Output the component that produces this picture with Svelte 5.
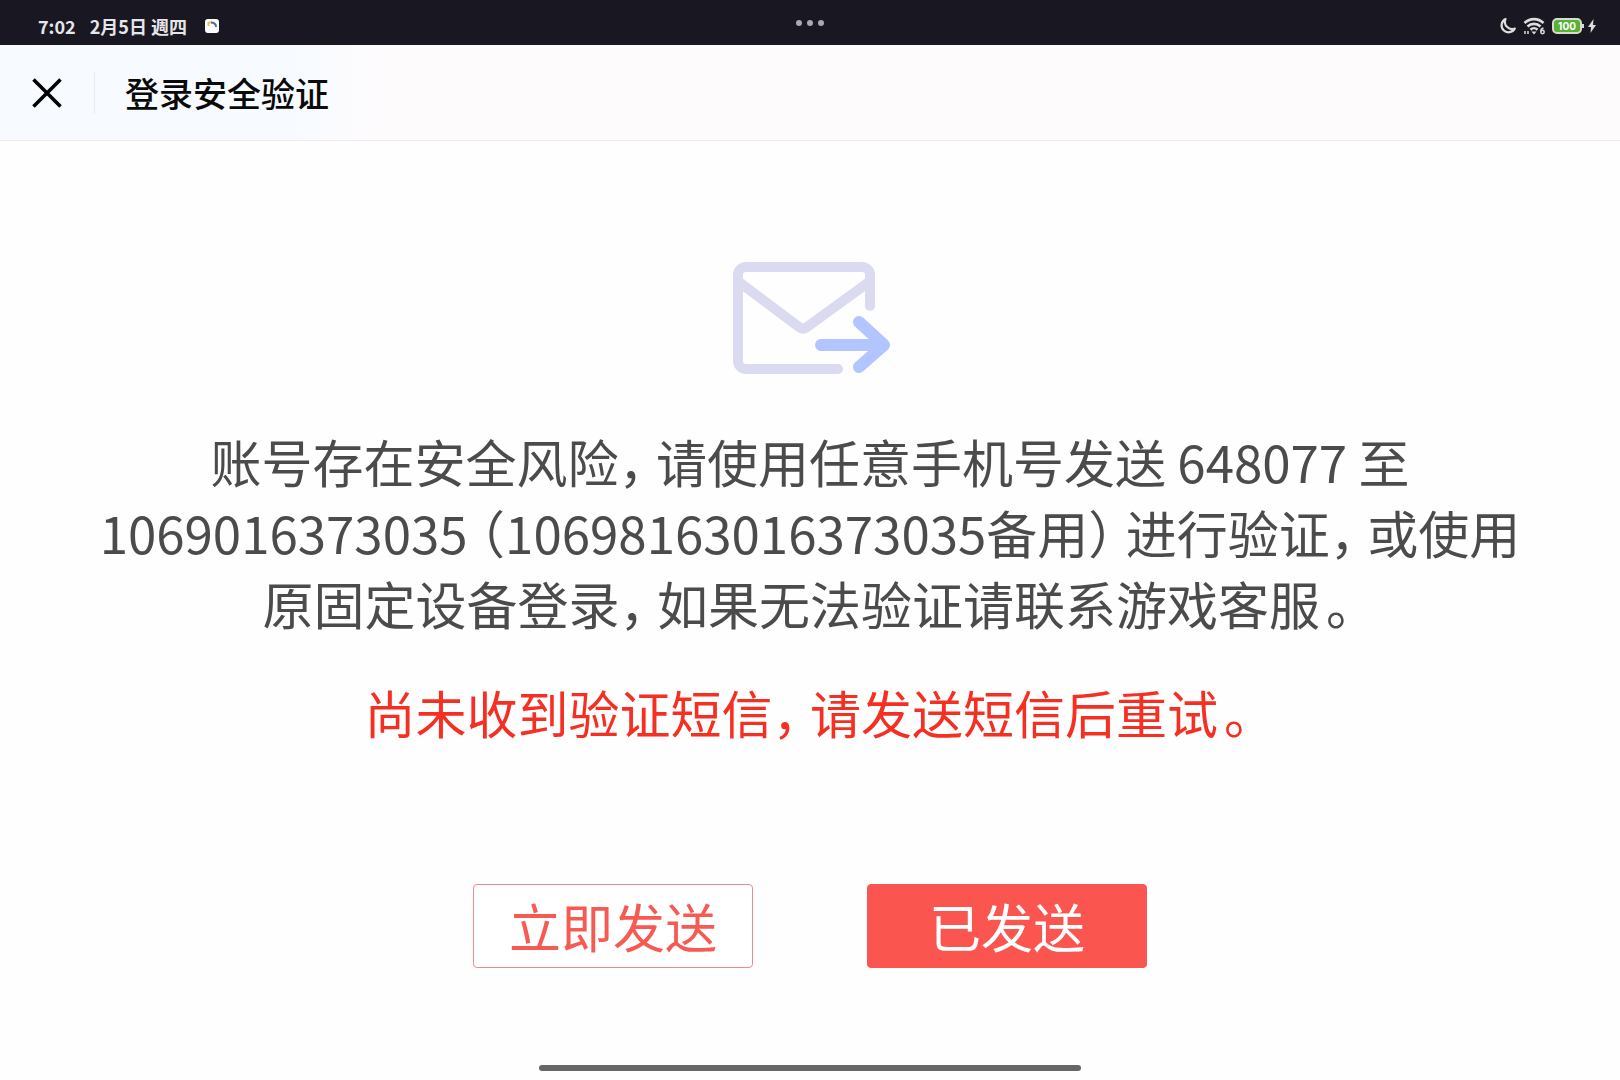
<script lang="ts">
  const time = '7:02';
  const date = '2月5日 週四';
  const battery = 100;

  let visible = $state(true);
</script>

<div class="page">
  <div class="status-bar">
    <div class="status-left">
      <span>{time}</span>
      <span>{date}</span>
      <svg class="notice" viewBox="0 0 14 14" aria-hidden="true">
        <rect width="14" height="14" rx="3" fill="#fff" />
        <path d="M3.500 7V3.500h3" fill="none" stroke="#e3c65a" stroke-width="2" />
        <path d="M6 3.500q5 0 5 4.500" fill="none" stroke="#596a9c" stroke-width="2" />
      </svg>
    </div>
    <svg class="dots" viewBox="0 0 28 6" aria-hidden="true">
      <circle cx="3" cy="3" r="3" />
      <circle cx="14" cy="3" r="3" />
      <circle cx="25" cy="3" r="3" />
    </svg>
    <div class="status-right">
      <svg class="moon" viewBox="0 0 18 18" aria-hidden="true">
        <path d="M6.500 2a7 7 0 1 0 9.300 9.500A7.200 7.200 0 0 1 6.500 2Z" fill="none" stroke="#ddd" stroke-width="2.200" stroke-linejoin="round" />
      </svg>
      <svg class="wifi" viewBox="0 0 23 18" aria-hidden="true">
        <path d="M1.500 6a13.500 13.500 0 0 1 19 0M4.500 9.500a9.300 9.300 0 0 1 13 0M7.500 12.700a5 5 0 0 1 7 0" fill="none" stroke="#ddd" stroke-width="2.600" />
        <path d="M8.500 14.500h5L11 17.500Z" fill="#ddd" />
        <path d="M2 17v-3M5 17v-3" stroke="#bbb" stroke-width="1.800" />
        <circle cx="19.500" cy="15" r="1.700" fill="none" stroke="#ddd" stroke-width="1.500" />
        <path d="M17.800 14.500q0-3 2.700-3.500" fill="none" stroke="#ddd" stroke-width="1.500" />
      </svg>
      <span class="battery">{battery}</span>
      <svg class="bolt" viewBox="0 0 8 14" aria-hidden="true">
        <path d="M5.500 0 0 8h3l-.5 6L8 6H5Z" fill="#ddd" />
      </svg>
    </div>
  </div>

  <header>
    <button class="close" aria-label="关闭" onclick={() => (visible = false)}>
      <svg viewBox="0 0 30 30" aria-hidden="true">
        <path d="M1.500 1.500 28.500 28.500M28.500 1.500 1.500 28.500" fill="none" stroke="#000" stroke-width="3.600" />
      </svg>
    </button>
    <h1>登录安全验证</h1>
  </header>

  {#if visible}
    <main>
      <svg class="mail" viewBox="-1 0 160 116" aria-hidden="true">
        <g fill="none" stroke-linecap="round" stroke-linejoin="round">
          <g stroke="#dadaf0" stroke-width="10">
            <path d="M139 46V15a8 8 0 0 0-8-8H15a8 8 0 0 0-8 8v86a8 8 0 0 0 8 8h92" />
            <path d="m8 22 60 45q4 3 8 0l62-45" />
          </g>
          <path d="M90 85h60M128 62l25 23-25 22" stroke="#b2c5ff" stroke-width="12" />
        </g>
      </svg>

      <p class="message">
        账号存在安全风险<span class="end">，</span>请使用任意手机号发送 648077 至<br />
        1069016373035<span class="start">（</span>10698163016373035备用<span class="end">）</span>进行验证<span class="end">，</span>或使用<br />
        原固定设备登录<span class="end">，</span>如果无法验证请联系游戏客服<span class="stop">。</span>
      </p>
      <p class="error" role="alert">尚未收到验证短信<span class="end">，</span>请发送短信后重试<span class="stop">。</span></p>

      <div class="actions">
        <button class="action">立即发送</button>
        <button class="action primary">已发送</button>
      </div>
    </main>
  {/if}

  <div class="home-bar"></div>
</div>

<style>
  :global(body) {
    margin: 0;
    background: #fefefe;
  }

  .page {
    display: flex;
    flex-direction: column;
    min-height: 100vh;
    box-sizing: border-box;
    padding-bottom: 9px;
    font-family: 'Noto Sans CJK SC', sans-serif;
  }

  .status-bar {
    display: grid;
    grid-template-columns: 1fr auto 1fr;
    align-items: center;
    height: 45px;
    padding: 0 24px;
    background: #191822;
    color: #e6e6ea;
    font-size: 18px;
    font-weight: 700;
  }

  .status-left,
  .status-right {
    display: flex;
    align-items: center;
    padding-top: 6px;
  }

  .status-left {
    gap: 14px;
    padding-left: 14px;
    line-height: 18px;
  }

  .status-right {
    justify-content: flex-end;
    gap: 6px;
  }

  .notice {
    width: 14px;
    height: 14px;
    margin-left: 4px;
  }

  .dots {
    width: 28px;
    height: 6px;
    fill: #aaa9ae;
  }

  .moon {
    width: 18px;
    height: 18px;
  }

  .wifi {
    width: 23px;
    height: 18px;
  }

  .bolt {
    width: 8px;
    height: 14px;
  }

  .battery {
    position: relative;
    box-sizing: border-box;
    width: 30px;
    height: 16px;
    border: 2px solid #d5ddd0;
    border-radius: 5px;
    background: #58b234;
    color: #fff;
    font: 700 10px/12px Inter, sans-serif;
    text-align: center;
  }

  .battery::after {
    content: '';
    position: absolute;
    top: 4px;
    right: -4px;
    width: 2px;
    height: 4px;
    background: #d5ddd0;
  }

  header {
    display: flex;
    align-items: center;
    height: 95px;
    border-bottom: 1px solid #f3e9ed;
    background: linear-gradient(90deg, #f7fbff 300px, #fefbfd 380px);
  }

  .close {
    display: flex;
    align-items: center;
    justify-content: center;
    width: 95px;
    height: 42px;
    padding: 0;
    border: 0;
    border-right: 1px solid #ece9f0;
    background: none;
    cursor: pointer;
  }

  .close svg {
    width: 30px;
    height: 30px;
  }

  h1 {
    margin: 0 0 0 30px;
    color: #0a0a0a;
    font-size: 34px;
    font-weight: 500;
    line-height: 42px;
  }

  main {
    display: flex;
    flex-direction: column;
    align-items: center;
    padding-top: 119px;
  }

  .mail {
    width: 160px;
    height: 116px;
  }

  .message,
  .error {
    margin: 50px 0 0;
    color: #4b4b4b;
    font-size: 51px;
    line-height: 71px;
    text-align: center;
  }

  .error {
    margin-top: 38px;
    color: #f52f22;
  }

  /* half-width punctuation with a little air around it */
  .start,
  .end,
  .stop {
    font-feature-settings: 'halt';
  }

  .start {
    margin-left: 12px;
  }

  .end {
    margin-right: 12px;
  }

  .stop {
    margin: 0 6px;
  }

  .actions {
    display: flex;
    gap: 114px;
    margin-top: 136px;
  }

  .action {
    box-sizing: border-box;
    width: 280px;
    height: 84px;
    padding: 0;
    border: 1px solid #f08b91;
    border-radius: 4px;
    background: #fff;
    color: #f65a52;
    font-family: inherit;
    font-size: 52px;
    font-weight: 400;
    line-height: 80px;
    cursor: pointer;
  }

  .primary {
    border-color: #fb5550;
    background: #fb5550;
    color: #fff;
  }

  .home-bar {
    align-self: center;
    width: 33.5%;
    height: 6px;
    margin-top: auto;
    border-radius: 3px;
    background: #666;
  }
</style>
